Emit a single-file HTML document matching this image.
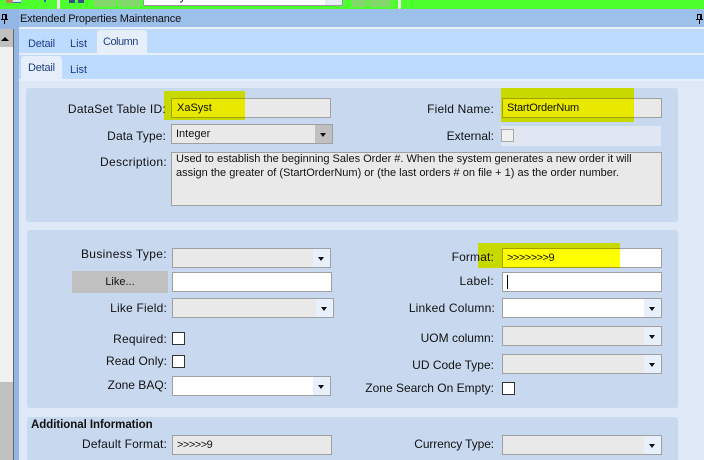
<!DOCTYPE html>
<html style="overflow:hidden;height:460px"><head><meta charset="utf-8">
<style>
html,body{margin:0;padding:0}
body{width:704px;height:460px;position:relative;overflow:hidden;background:#dee8f6;font-family:"Liberation Sans",sans-serif;font-size:12px;color:#111}
div{position:absolute;box-sizing:border-box}
.l{text-align:right;white-space:nowrap;height:14px;line-height:14px;letter-spacing:.3px}
.f{border:1px solid #a0a0a0;background:#e9e9e9;height:20px;font-size:11px;line-height:18px;padding-left:4px;white-space:nowrap}
.w{background:#fff}
.b{position:absolute;right:0;top:0;bottom:0;width:17px;background:#e8f0fb}
.b:after{content:"";position:absolute;left:5px;top:8px;border:3px solid transparent;border-top:4px solid #111;border-bottom:0}
.c{width:13px;height:13px;border:1px solid #333;background:#fff}
.t{color:#1f3f8c;white-space:nowrap;line-height:14px;height:14px;font-size:11px}
.p{background:#c8d9ef;border-radius:3px}
.y{mix-blend-mode:multiply;background:#ffff00}
</style></head><body>
<div style="left:0;top:0;width:704px;height:9px;background:#4dff2d"></div>
<div style="left:6px;top:0;width:7px;height:3px;background:#c08a50"></div>
<div style="left:13px;top:0;width:8px;height:3px;background:#dcebff;border-bottom:1px solid #3a6fc0"></div>
<div style="left:44px;top:0;width:2px;height:2px;background:#2a5fa0"></div>
<div style="left:57px;top:0;width:3px;height:9px;background:#e8e8e8"></div>
<div style="left:69px;top:0;width:6px;height:3px;background:#34508c"></div>
<div style="left:78px;top:0;width:6px;height:3px;background:#34508c"></div>
<div style="left:94px;top:0;width:22px;height:7px;background:#82d86a"></div>
<div style="left:118px;top:0;width:22px;height:7px;background:#82d86a"></div>
<div style="left:143px;top:0;width:200px;height:6px;background:#fff;border:1px solid #999;border-top:0;overflow:hidden"><div style="left:5px;top:-11px;height:14px;font-size:12px;line-height:14px;white-space:nowrap">PartDyst</div></div>
<div style="left:325px;top:0;width:17px;height:5px;background:#e6eef9"></div>
<div style="left:352px;top:0;width:15px;height:7px;background:#82d86a"></div>
<div style="left:369px;top:0;width:22px;height:7px;background:#82d86a"></div>
<div style="left:398px;top:0;width:3px;height:9px;background:#e8e8e8"></div>

<div style="left:0;top:9px;width:704px;height:18px;background:#9dc0ea"></div>
<div style="left:0;top:9px;width:19px;height:20px;background:#94b6e4"></div>
<div style="left:20px;top:12px;height:14px;line-height:14px;font-size:11px;letter-spacing:-.15px;white-space:nowrap;color:#111">Extended Properties Maintenance</div>
<svg style="position:absolute;left:0;top:14px" width="9" height="10"><path d="M2.500 .5h4v5h-4zM5.500 .5v5M1 5.500h7" fill="none" stroke="#000"/><path d="M4.500 6v4" stroke="#000" fill="none"/></svg>
<svg style="position:absolute;left:695px;top:14px" width="9" height="10"><path d="M2.500 .5h4v5h-4zM5.500 .5v5M1 5.500h7" fill="none" stroke="#000"/><path d="M4.500 6v4" stroke="#000" fill="none"/></svg>

<div style="left:0;top:29px;width:13px;height:431px;background:#f0f0f0"></div>
<div style="left:0;top:29px;width:13px;height:18px;background:#c0c0c0"></div>
<div style="left:1px;top:37px;width:0;height:0;border:4px solid transparent;border-bottom:4px solid #000;border-top:0"></div>
<div style="left:0;top:382px;width:13px;height:78px;background:#c0c0c0"></div>
<div style="left:13px;top:29px;width:1px;height:431px;background:#666"></div>
<div style="left:14px;top:27px;width:5px;height:433px;background:#94b6e4"></div>

<div style="left:19px;top:27px;width:685px;height:2px;background:#e8eff9"></div>
<div style="left:19px;top:29px;width:685px;height:24px;background:#bddaff"></div>
<div style="left:19px;top:53px;width:685px;height:2px;background:#e8eff9"></div>
<div style="left:19px;top:55px;width:685px;height:24px;background:#bddaff"></div>
<div style="left:19px;top:79px;width:685px;height:2px;background:#e8eff9"></div>
<div style="left:97px;top:30px;width:50px;height:23px;background:#e6eef9;border-radius:3px 3px 0 0"></div>
<div style="left:21px;top:56px;width:41px;height:23px;background:#e6eef9;border-radius:3px 3px 0 0"></div>
<div class="t" style="left:28px;top:37px;letter-spacing:-.2px">Detail</div>
<div class="t" style="left:70px;top:37px">List</div>
<div class="t" style="left:103px;top:35px;letter-spacing:-.5px">Column</div>
<div class="t" style="left:28px;top:61px;letter-spacing:-.2px">Detail</div>
<div class="t" style="left:70px;top:63px">List</div>

<div class="p" style="left:26px;top:88px;width:652px;height:134px"></div>
<div class="p" style="left:27px;top:230px;width:651px;height:178px"></div>
<div class="p" style="left:27px;top:417px;width:651px;height:43px;border-radius:3px 3px 0 0"></div>

<div class="l" style="right:538px;top:102px;letter-spacing:.25px">DataSet Table ID:</div>
<div class="f" style="left:171px;top:98px;width:160px;padding-left:5px;line-height:19px">XaSyst</div>
<div class="l" style="right:210px;top:102px;letter-spacing:.2px">Field Name:</div>
<div class="f" style="left:502px;top:98px;width:160px;letter-spacing:-.2px;line-height:19px">StartOrderNum</div>
<div class="l" style="right:538px;top:129px;letter-spacing:.1px">Data Type:</div>
<div class="f" style="left:171px;top:124px;width:162px">Integer<div class="b" style="background:#c0c0c0"></div></div>
<div class="l" style="right:210px;top:129px;letter-spacing:0">External:</div>
<div style="left:501px;top:126px;width:160px;height:20px;background:#e0e7f2"></div>
<div style="left:501px;top:129px;width:13px;height:13px;border:1px solid #a8a8a8;background:#f0f0f0"></div>
<div class="l" style="right:537px;top:155px">Description:</div>
<div class="f" style="left:171px;top:152px;width:491px;height:54px;line-height:13.500px;white-space:normal">Used to establish the beginning Sales Order #. When the system generates a new order it will<br>assign the greater of (StartOrderNum) or (the last orders # on file + 1) as the order number.</div>

<div class="l" style="right:537px;top:247px;letter-spacing:.35px">Business Type:</div>
<div class="f" style="left:172px;top:248px;width:159px"><div class="b"></div></div>
<div style="left:72px;top:271px;width:96px;height:22px;background:#c0c0c0;text-align:center;line-height:22px;font-size:11px">Like...</div>
<div class="f w" style="left:172px;top:272px;width:160px"></div>
<div class="l" style="right:537px;top:301px;letter-spacing:.2px">Like Field:</div>
<div class="f" style="left:172px;top:298px;width:162px"><div class="b"></div></div>
<div class="l" style="right:537px;top:332px;letter-spacing:.2px">Required:</div>
<div class="c" style="left:172px;top:332px"></div>
<div class="l" style="right:537px;top:354px;letter-spacing:.1px">Read Only:</div>
<div class="c" style="left:172px;top:355px"></div>
<div class="l" style="right:537px;top:378px;letter-spacing:0">Zone BAQ:</div>
<div class="f w" style="left:172px;top:376px;width:159px"><div class="b"></div></div>

<div class="l" style="right:210px;top:250px;letter-spacing:.15px">Format:</div>
<div class="f w" style="left:502px;top:248px;width:160px;letter-spacing:-.5px">&gt;&gt;&gt;&gt;&gt;&gt;&gt;9</div>
<div class="l" style="right:210px;top:274px">Label:</div>
<div class="f w" style="left:502px;top:272px;width:160px"></div>
<div style="left:507px;top:275px;width:1px;height:14px;background:#000"></div>
<div class="l" style="right:209px;top:301px;letter-spacing:.2px">Linked Column:</div>
<div class="f w" style="left:502px;top:298px;width:160px"><div class="b"></div></div>
<div class="l" style="right:210px;top:331px;letter-spacing:0">UOM column:</div>
<div class="f" style="left:502px;top:326px;width:160px"><div class="b"></div></div>
<div class="l" style="right:210px;top:358px;letter-spacing:0">UD Code Type:</div>
<div class="f" style="left:502px;top:354px;width:160px"><div class="b"></div></div>
<div class="l" style="right:210px;top:381px;letter-spacing:0">Zone Search On Empty:</div>
<div class="c" style="left:502px;top:382px"></div>

<div style="left:31px;top:418px;height:14px;line-height:14px;font-weight:bold;font-size:11.500px;letter-spacing:-.05px;white-space:nowrap">Additional Information</div>
<div class="l" style="right:537px;top:437px;letter-spacing:.15px">Default Format:</div>
<div class="f" style="left:172px;top:435px;width:160px;letter-spacing:-.5px">&gt;&gt;&gt;&gt;&gt;9</div>
<div class="l" style="right:210px;top:437px;letter-spacing:-.1px">Currency Type:</div>
<div class="f" style="left:502px;top:435px;width:160px"><div class="b"></div></div>

<div class="y" style="left:164px;top:91px;width:81px;height:29px"></div>
<div class="y" style="left:501px;top:88px;width:133px;height:34px"></div>
<div class="y" style="left:478px;top:243px;width:142px;height:25px"></div>
</body></html>
